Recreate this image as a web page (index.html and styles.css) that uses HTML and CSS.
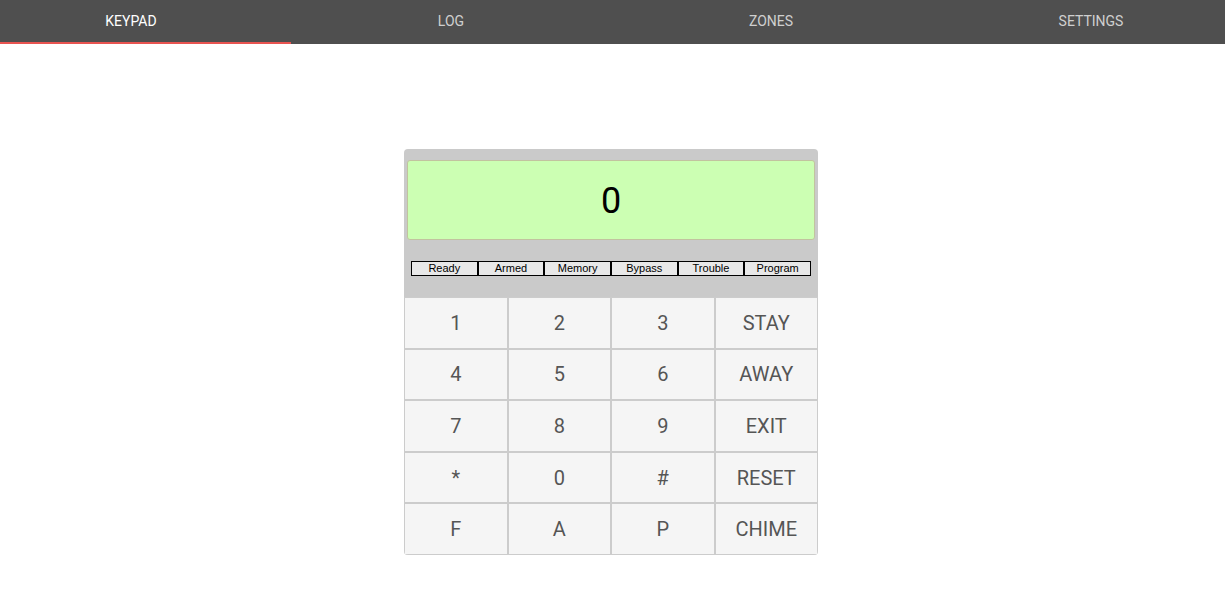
FILE: index.html
```html
<!DOCTYPE html>
<html>
<head>
<meta charset="utf-8">
<link rel="stylesheet" href="styles.css">
</head>
<body>
<nav class="nav">
  <div class="tabs">
    <div class="tab active">KEYPAD</div>
    <div class="tab">LOG</div>
    <div class="tab">ZONES</div>
    <div class="tab">SETTINGS</div>
  </div>
  <div class="indicator"></div>
</nav>
<main class="main">
  <div class="keypad">
    <div class="display">0</div>
    <div class="status">
      <div class="lamp">Ready</div>
      <div class="lamp">Armed</div>
      <div class="lamp">Memory</div>
      <div class="lamp">Bypass</div>
      <div class="lamp">Trouble</div>
      <div class="lamp">Program</div>
    </div>
    <div class="keys">
      <div class="key">1</div><div class="key">2</div><div class="key">3</div><div class="key">STAY</div>
      <div class="key">4</div><div class="key">5</div><div class="key">6</div><div class="key">AWAY</div>
      <div class="key">7</div><div class="key">8</div><div class="key">9</div><div class="key">EXIT</div>
      <div class="key">*</div><div class="key">0</div><div class="key">#</div><div class="key">RESET</div>
      <div class="key">F</div><div class="key">A</div><div class="key">P</div><div class="key">CHIME</div>
    </div>
  </div>
</main>
</body>
</html>
```
FILE: styles.css
```css
* { box-sizing: border-box; }
html, body { margin: 0; padding: 0; background: #fff; }
body { font-family: Roboto, "Liberation Sans", Arial, sans-serif; }

.nav {
  position: relative;
  height: 44px;
  background: #4f4f4f;
  overflow: hidden;
}
.tabs {
  display: grid;
  grid-template-columns: repeat(4, 320px);
  margin-left: -29px;
  height: 44px;
}
.tab {
  display: flex;
  align-items: center;
  justify-content: center;
  font-size: 14px;
  font-weight: 400;
  color: #cfcfcf;
  padding-bottom: 2px;
}
.tab.active { color: #ffffff; }
.indicator {
  position: absolute;
  left: 0;
  bottom: 0;
  width: 291px;
  height: 2px;
  background: #e85451;
}

.main {
  display: flex;
  justify-content: center;
  padding-top: 105px;
  padding-right: 3px;
}
.keypad {
  width: 414px;
  background: #cacaca;
  border-radius: 4px;
  overflow: hidden;
  padding-top: 11px;
}
.display {
  margin: 0 3px;
  height: 80px;
  background: #ccffb3;
  border: 1px solid #c2c39f;
  border-radius: 3px;
  display: flex;
  align-items: center;
  justify-content: center;
  font-size: 36px;
  color: #000;
  padding-top: 1px;
}
.status {
  display: grid;
  grid-template-columns: repeat(6, 1fr);
  margin: 21px 7px 21px 7px;
  height: 15px;
}
.lamp {
  border: 1px solid #000;
  background: #e8e8e8;
  font-family: "Liberation Sans", Arial, sans-serif;
  font-size: 11px;
  line-height: 13px;
  text-align: center;
  color: #000;
}
.keys {
  display: grid;
  grid-template-columns: repeat(4, 1fr);
  grid-auto-rows: 51.6px;
  background: #f5f5f5;
}
.key {
  border: 1px solid #cccccc;
  background: #f5f5f5;
  display: flex;
  align-items: center;
  justify-content: center;
  font-size: 20px;
  color: #555555;
}
```
